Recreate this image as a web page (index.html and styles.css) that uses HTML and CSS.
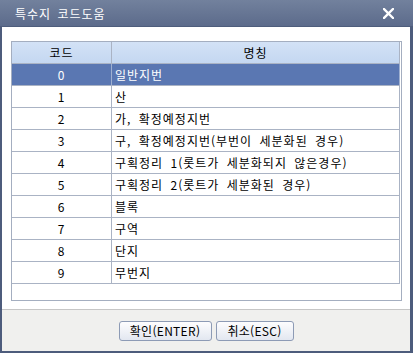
FILE: index.html
```html
<!DOCTYPE html>
<html lang="ko">
<head>
    <meta charset="UTF-8">
    <title>특수지 코드도움</title>
    <link rel="stylesheet" href="styles.css">
</head>
<body>
    <div class="window">
        <div class="titlebar">
            <span class="title">특수지 코드도움</span>
            <svg class="close" width="11" height="11" viewBox="0 0 11 11">
                <path d="M1 1 L10 10 M10 1 L1 10" stroke="#fff" stroke-width="2.4" stroke-linecap="square"/>
            </svg>
        </div>
        <div class="frame">
            <div class="content">
                <div class="grid">
                    <div class="row head">
                        <div class="cell code">코드</div>
                        <div class="cell name">명칭</div>
                    </div>
                    <div class="row selected">
                        <div class="cell code">0</div>
                        <div class="cell">일반지번</div>
                    </div>
                    <div class="row">
                        <div class="cell code">1</div>
                        <div class="cell">산</div>
                    </div>
                    <div class="row">
                        <div class="cell code">2</div>
                        <div class="cell">가, 확정예정지번</div>
                    </div>
                    <div class="row">
                        <div class="cell code">3</div>
                        <div class="cell">구, 확정예정지번(부번이 세분화된 경우)</div>
                    </div>
                    <div class="row">
                        <div class="cell code">4</div>
                        <div class="cell">구획정리 1(롯트가 세분화되지 않은경우)</div>
                    </div>
                    <div class="row">
                        <div class="cell code">5</div>
                        <div class="cell">구획정리 2(롯트가 세분화된 경우)</div>
                    </div>
                    <div class="row">
                        <div class="cell code">6</div>
                        <div class="cell">블록</div>
                    </div>
                    <div class="row">
                        <div class="cell code">7</div>
                        <div class="cell">구역</div>
                    </div>
                    <div class="row">
                        <div class="cell code">8</div>
                        <div class="cell">단지</div>
                    </div>
                    <div class="row">
                        <div class="cell code">9</div>
                        <div class="cell">무번지</div>
                    </div>
                </div>
            </div>
            <div class="footer">
                <button type="button" class="btn btn-ok">확인(ENTER)</button>
                <button type="button" class="btn btn-cancel">취소(ESC)</button>
            </div>
        </div>
    </div>
</body>
</html>
```

FILE: styles.css
```css
body {
    margin: 0;
    padding: 0;
    font-family: "Noto Sans CJK KR", "Noto Sans", sans-serif;
    font-size: 12px;
}
.window {
    width: 413px;
    height: 353px;
    display: flex;
    flex-direction: column;
    box-sizing: border-box;
}
.titlebar {
    height: 27px;
    box-sizing: border-box;
    background: linear-gradient(to bottom, #72819d, #5c6b8b);
    border-bottom: 1px solid #4e5d7c;
    display: flex;
    align-items: center;
    justify-content: space-between;
    padding: 0 19px 0 15px;
}
.title {
    color: #fff;
    font-size: 12px;
    letter-spacing: 1px;
    word-spacing: 2px;
}
.close {
    display: block;
    margin-top: 1px;
}
.frame {
    flex: 1;
    display: flex;
    flex-direction: column;
    border-left: 2px solid #4d5c7c;
    border-right: 3px solid #4d5c7c;
    border-bottom: 2px solid #4d5c7c;
    background: #fff;
}
.content {
    padding: 14px 8px 8px 9px;
    border-bottom: 1px solid #c6c6c6;
}
.grid {
    height: 260px;
    box-sizing: border-box;
    border: 1px solid #a4aec0;
    padding-right: 1px;
}
.row {
    display: grid;
    grid-template-columns: 100px 288px;
    height: 22px;
    box-sizing: border-box;
    border-bottom: 1px solid #aab3c4;
}
.cell {
    border-right: 1px solid #aab3c4;
    line-height: 21px;
    padding-left: 3px;
    white-space: nowrap;
    overflow: hidden;
    color: #000;
    letter-spacing: 1px;
    word-spacing: 3px;
}
.cell.code, .cell.name {
    text-align: center;
    padding-left: 0;
}
.head {
    background: linear-gradient(to bottom, #d3e2f6, #c4d7f1);
}
.selected {
    background: #5a77b2;
}
.selected .cell {
    color: #fff;
    border-right-color: #9fb0d0;
}
.footer {
    flex: 1;
    background: #f0f0ee;
    display: flex;
    justify-content: center;
    align-items: flex-start;
    gap: 4px;
    padding-top: 11px;
}
.btn {
    height: 20px;
    padding: 0;
    font-family: "Noto Sans CJK KR", "Noto Sans", sans-serif;
    font-size: 12px;
    line-height: 18px;
    letter-spacing: 0.3px;
    color: #000;
    border: 1px solid #8d9bb5;
    border-radius: 3px;
    background: linear-gradient(to bottom, #fdfdfe, #e2e7f0);
}
.btn-ok {
    width: 93px;
}
.btn-cancel {
    width: 78px;
}
```
